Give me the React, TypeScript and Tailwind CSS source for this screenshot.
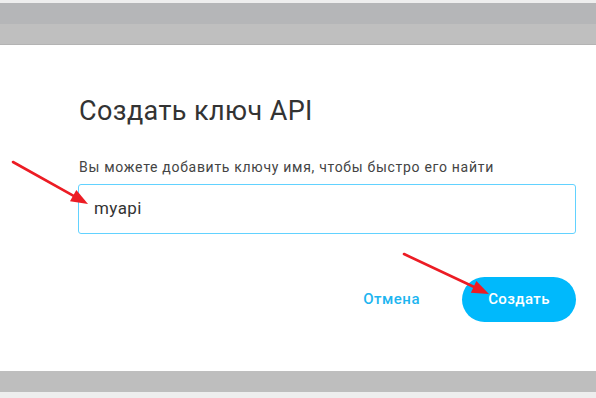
import React from "react";

const Arrow = ({ x1, y1, x2, y2 }: { x1: number; y1: number; x2: number; y2: number }) => {
  const a = Math.atan2(y2 - y1, x2 - x1);
  const len = 17;
  const w = 6.5;
  const bx = x2 - len * Math.cos(a);
  const by = y2 - len * Math.sin(a);
  const px = -Math.sin(a) * w;
  const py = Math.cos(a) * w;
  return (
    <g>
      <line x1={x1} y1={y1} x2={bx} y2={by} stroke="#ec1c24" strokeWidth={2.6} strokeLinecap="round" />
      <polygon points={`${x2},${y2} ${bx + px},${by + py} ${bx - px},${by - py}`} fill="#ec1c24" />
    </g>
  );
};

export default function App() {
  return (
    <div className="relative w-[596px] h-[398px] overflow-hidden bg-white" style={{ fontFamily: "Roboto, 'Noto Sans', sans-serif" }}>
      <div className="h-[3px] bg-[#eeeeee]" />
      <div className="h-[21px] bg-[#b5b6b8]" />
      <div className="h-[21px] bg-[#bfbfbf] border-b border-[#b3b3b3]" />

      <div className="h-[326px] pl-[78px] pr-[20px] pt-[50px]">
        <h1 className="text-[27px] leading-[32px] font-normal tracking-[0.4px] text-[#333333] ml-px">Создать ключ API</h1>
        <p className="mt-[30px] text-[14px] leading-[20px] tracking-[0.7px] text-[#444444] ml-px">
          Вы можете добавить ключу имя, чтобы быстро его найти
        </p>
        <div className="mt-[7px] w-[498px] h-[50px] border border-[#62d2ff] rounded-[3px] flex items-center pl-[15px]">
          <span className="text-[17px] tracking-[0.4px] text-[#333333]">myapi</span>
        </div>
        <div className="mt-[43px] w-[498px] flex items-center justify-end gap-[42px]">
          <button className="text-[15px] font-medium tracking-[0.5px] text-[#1db5f0]">Отмена</button>
          <button className="w-[114px] h-[45px] rounded-full bg-[#00b9fc] text-white text-[15px] font-medium tracking-[0.4px]">
            Создать
          </button>
        </div>
      </div>

      <div className="h-[21px] bg-[#bebebe]" />
      <div className="h-[6px] bg-[#eeeeee]" />

      <svg className="absolute inset-0 pointer-events-none" width={596} height={398}>
        <Arrow x1={13} y1={162} x2={88} y2={204} />
        <Arrow x1={404} y1={254} x2={489} y2={294} />
      </svg>
    </div>
  );
}
